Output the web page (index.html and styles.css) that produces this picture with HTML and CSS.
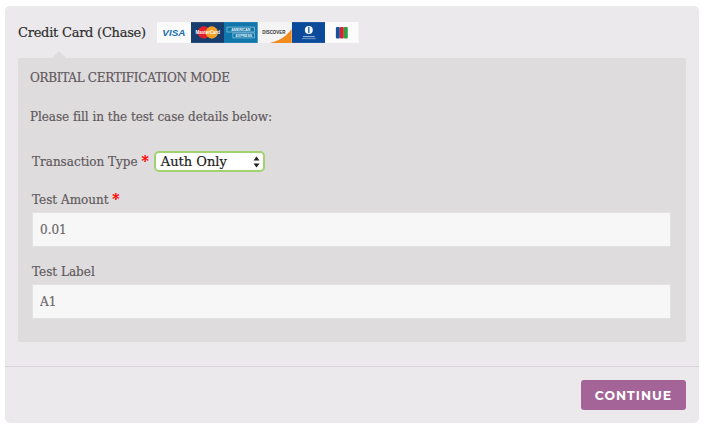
FILE: index.html
```html
<!DOCTYPE html>
<html lang="en">
<head>
    <meta charset="UTF-8">
    <title>Checkout</title>
    <link rel="stylesheet" href="styles.css">
</head>
<body>
    <div class="card">
        <div class="card-top">
            <div class="method">
                <span class="method-name">Credit Card (Chase)</span>
                <div class="logos">
                    <svg class="logo" viewBox="0 0 34 21">
                        <rect width="34" height="21" fill="#fbfbfb"/>
                        <text x="17" y="14.5" text-anchor="middle" class="t-visa">VISA</text>
                    </svg>
                    <svg class="logo" viewBox="0 0 34 21">
                        <rect width="34" height="21" fill="#173d6e"/>
                        <circle cx="13" cy="10.5" r="6.2" fill="#e2202c"/>
                        <circle cx="21" cy="10.5" r="6.2" fill="#f4a024"/>
                        <text x="17" y="12" text-anchor="middle" class="t-mc">MasterCard</text>
                    </svg>
                    <svg class="logo" viewBox="0 0 34 21">
                        <rect width="34" height="21" fill="#0f77ab"/>
                        <rect x="3" y="5" width="28" height="5" fill="#0f77ab" stroke="#b5d6e6" stroke-width=".6"/>
                        <text x="17" y="9" text-anchor="middle" class="t-amex">AMERICAN</text>
                        <rect x="9" y="11" width="22" height="5" fill="#0f77ab" stroke="#b5d6e6" stroke-width=".6"/>
                        <text x="20" y="15" text-anchor="middle" class="t-amex">EXPRESS</text>
                    </svg>
                    <svg class="logo" viewBox="0 0 34 21">
                        <rect width="34" height="21" fill="#f4f4f4"/>
                        <path d="M34 7V21H12C22 19 29 14 34 7Z" fill="#f28a1c"/>
                        <text x="16" y="12" text-anchor="middle" class="t-disc">DISCOVER</text>
                    </svg>
                    <svg class="logo" viewBox="0 0 34 21">
                        <rect width="34" height="21" fill="#0b4a9a"/>
                        <circle cx="17" cy="8" r="4" fill="#f4f7fb"/>
                        <rect x="16.4" y="5" width="1.2" height="6" fill="#0b4a9a"/>
                        <rect x="11" y="14" width="12" height="1.2" fill="#8fb0d6"/>
                        <rect x="10" y="16.2" width="14" height="1" fill="#6f97c8"/>
                    </svg>
                    <svg class="logo" viewBox="0 0 34 21">
                        <rect width="34" height="21" fill="#fbfbfb"/>
                        <rect x="11" y="5" width="4" height="11.5" rx="1" fill="#1c4f9c"/>
                        <rect x="15" y="5" width="4" height="11.5" rx="1" fill="#d8232f"/>
                        <rect x="19" y="5" width="4" height="11.5" rx="1" fill="#2f9e44"/>
                    </svg>
                </div>
            </div>
            <div class="panel">
                <p class="mode">ORBITAL CERTIFICATION MODE</p>
                <p class="intro">Please fill in the test case details below:</p>
                <div class="type-row">
                    <label class="label">Transaction Type <span class="req">*</span></label>
                    <div class="select">
                        <span>Auth Only</span>
                        <svg width="7" height="12" viewBox="0 0 7 12"><path d="M3.5 0.5L6.5 4.5H0.5ZM3.5 11.5L0.5 7.5H6.5Z" fill="#222"/></svg>
                    </div>
                </div>
                <div class="field">
                    <label class="label">Test Amount <span class="req">*</span></label>
                    <input class="input" type="text" value="0.01">
                </div>
                <div class="field">
                    <label class="label">Test Label</label>
                    <input class="input" type="text" value="A1">
                </div>
            </div>
        </div>
        <div class="card-foot">
            <button class="continue">CONTINUE</button>
        </div>
    </div>
</body>
</html>
```

FILE: styles.css
```css
*{margin:0;padding:0;box-sizing:border-box;}
body{
    background-color:#fff;
    padding:6px 5px;
    font-family:"DejaVu Serif","Liberation Serif",serif;
}
.card{
    height:417px;
    background-color:#ebe9eb;
    border-radius:5px;
    display:flex;
    flex-direction:column;
}
.card-top{
    padding:16px 13px 0;
    border-bottom:1px solid #d9d4d9;
    height:361px;
}
.method{
    display:flex;
    align-items:center;
    height:21px;
}
.method-name{
    font-size:13px;
    letter-spacing:-0.25px;
    color:#2e2e2e;
    -webkit-text-stroke:0.2px #2e2e2e;
    width:139px;
}
.logos{
    display:flex;
}
.logo{
    display:block;
    width:33.67px;
    height:21px;
}
.panel{
    position:relative;
    margin-top:15px;
    height:284px;
    background-color:#dfdcde;
    padding:12px 15px 0 12px;
    color:#5f5a5d;
    font-size:12px;
    -webkit-text-stroke:0.2px #5f5a5d;
}
.panel:before{
    content:"";
    position:absolute;
    top:-7px;
    left:34px;
    border-left:7px solid transparent;
    border-right:7px solid transparent;
    border-bottom:7px solid #dfdcde;
}
.mode{
    letter-spacing:-0.3px;
    line-height:16px;
}
.intro{
    margin-top:23px;
    line-height:16px;
    letter-spacing:-0.05px;
}
.type-row{
    display:flex;
    align-items:center;
    margin-top:26px;
    padding-left:2px;
}
.label{
    line-height:16px;
}
.req{
    color:#f00;
    -webkit-text-stroke:0.2px #f00;
    font-size:14px;
    font-weight:bold;
    line-height:14px;
}
.select{
    margin-left:5px;
    width:111px;
    height:21px;
    background-color:#fff;
    border:2px solid #a0d36f;
    border-radius:5px;
    display:flex;
    align-items:center;
    justify-content:space-between;
    padding:0 3px 0 5px;
    font-size:13px;
    color:#1c1c1c;
    -webkit-text-stroke:0.2px #1c1c1c;
}
.field{
    margin-top:20px;
    padding-left:2px;
}
.field + .field{
    margin-top:17px;
}
.input{
    display:block;
    width:100%;
    height:35px;
    margin-top:4px;
    border:1px solid #e4e1e3;
    background-color:#f7f7f7;
    padding:0 7px;
    font-family:inherit;
    font-size:12px;
    color:#6b6669;
    -webkit-text-stroke:0.2px #6b6669;
}
.card-foot{
    display:flex;
    justify-content:flex-end;
    padding:13px 13px 0;
}
.continue{
    width:105px;
    height:30px;
    border:0;
    border-radius:3px;
    background-color:#a46497;
    color:#fff;
    font-family:"Montserrat","Inter",sans-serif;
    font-size:12.5px;
    font-weight:700;
    letter-spacing:1px;
}
.t-visa{
    font-family:"Liberation Sans",sans-serif;
    font-size:10px;
    font-weight:700;
    font-style:italic;
    fill:#1a6fb0;
}
.t-mc{
    font-family:"Liberation Sans",sans-serif;
    font-size:4.5px;
    font-weight:700;
    fill:#fff;
}
.t-disc{
    font-family:"Liberation Sans",sans-serif;
    font-size:4.5px;
    font-weight:700;
    fill:#333;
}
.t-amex{
    font-family:"Liberation Sans",sans-serif;
    font-size:3.6px;
    font-weight:700;
    fill:#e4f0f6;
}
```
